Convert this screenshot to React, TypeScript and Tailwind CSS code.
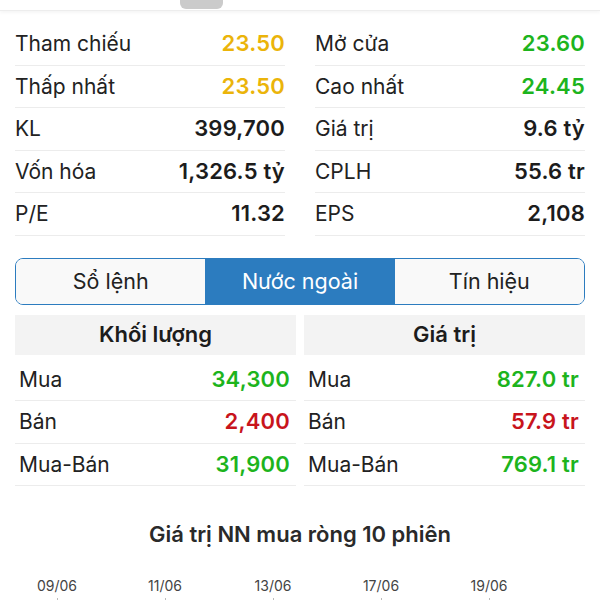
import React from 'react';

type Stat = { label: string; value: string; color: string };

const leftStats: Stat[] = [
  { label: 'Tham chiếu', value: '23.50', color: 'text-[#ebb40a]' },
  { label: 'Thấp nhất', value: '23.50', color: 'text-[#ebb40a]' },
  { label: 'KL', value: '399,700', color: 'text-[#1c1c1c]' },
  { label: 'Vốn hóa', value: '1,326.5 tỷ', color: 'text-[#1c1c1c]' },
  { label: 'P/E', value: '11.32', color: 'text-[#1c1c1c]' },
];

const rightStats: Stat[] = [
  { label: 'Mở cửa', value: '23.60', color: 'text-[#1db41d]' },
  { label: 'Cao nhất', value: '24.45', color: 'text-[#1db41d]' },
  { label: 'Giá trị', value: '9.6 tỷ', color: 'text-[#1c1c1c]' },
  { label: 'CPLH', value: '55.6 tr', color: 'text-[#1c1c1c]' },
  { label: 'EPS', value: '2,108', color: 'text-[#1c1c1c]' },
];

const volRows: Stat[] = [
  { label: 'Mua', value: '34,300', color: 'text-[#1db41d]' },
  { label: 'Bán', value: '2,400', color: 'text-[#c8141c]' },
  { label: 'Mua-Bán', value: '31,900', color: 'text-[#1db41d]' },
];

const valRows: Stat[] = [
  { label: 'Mua', value: '827.0 tr', color: 'text-[#1db41d]' },
  { label: 'Bán', value: '57.9 tr', color: 'text-[#c8141c]' },
  { label: 'Mua-Bán', value: '769.1 tr', color: 'text-[#1db41d]' },
];

const dates = ['09/06', '11/06', '13/06', '17/06', '19/06'];

const StatColumn: React.FC<{ items: Stat[] }> = ({ items }) => (
  <div className="flex flex-col">
    {items.map((s) => (
      <div key={s.label} className="flex h-[42.5px] items-center justify-between border-b border-[#ececec]">
        <span className="text-[21px] text-[#222]">{s.label}</span>
        <span className={`text-[22px] font-semibold tracking-[0.2px] ${s.color}`}>{s.value}</span>
      </div>
    ))}
  </div>
);

const ForeignPanel: React.FC<{ title: string; rows: Stat[] }> = ({ title, rows }) => (
  <div className="flex flex-col">
    <div className="flex h-[40px] items-center justify-center bg-[#f3f3f3] text-[22px] font-semibold text-[#1c1c1c]">
      {title}
    </div>
    <div className="flex flex-col pt-[4px]">
      {rows.map((r) => (
        <div key={r.label} className="flex h-[42.5px] items-center justify-between border-b border-[#ececec] pl-[4px] pr-[6px]">
          <span className="text-[21px] text-[#222]">{r.label}</span>
          <span className={`text-[22px] font-semibold tracking-[0.2px] ${r.color}`}>{r.value}</span>
        </div>
      ))}
    </div>
  </div>
);

export default function App() {
  return (
    <div className="h-[600px] w-[600px] overflow-hidden bg-white font-['Inter','Noto_Sans',sans-serif]">
      {/* top strip (cut off card) */}
      <div className="flex h-[11px] justify-center border-b border-[#ededed] shadow-[0_2px_3px_rgba(0,0,0,0.04)]">
        <div className="ml-[-197px] h-[9px] w-[43px] rounded-b-[6px] bg-[#cbcbcb]" />
      </div>

      <div className="grid grid-cols-2 gap-[30px] px-[15px] pt-[12px]">
        <StatColumn items={leftStats} />
        <StatColumn items={rightStats} />
      </div>

      <div className="mx-[15px] mt-[22px] grid h-[47px] grid-cols-3 overflow-hidden rounded-[8px] border-[1.5px] border-[#2c7cbf]">
        <div className="flex items-center justify-center bg-[#f9f9f9] text-[21.5px] text-[#222]">Sổ lệnh</div>
        <div className="flex items-center justify-center bg-[#2c7cbf] text-[21.5px] text-white">Nước ngoài</div>
        <div className="flex items-center justify-center bg-[#f9f9f9] text-[21.5px] text-[#222]">Tín hiệu</div>
      </div>

      <div className="mx-[15px] mt-[10px] grid grid-cols-2 gap-[8px]">
        <ForeignPanel title="Khối lượng" rows={volRows} />
        <ForeignPanel title="Giá trị" rows={valRows} />
      </div>

      <div className="mt-[32px] text-center text-[22px] font-semibold text-[#2a2a2a]">
        Giá trị NN mua ròng 10 phiên
      </div>

      <div className="mt-[24px] flex pl-[3px]">
        {dates.map((d) => (
          <div key={d} className="flex w-[108px] flex-col items-center">
            <span className="text-[14px] text-[#444]">{d}</span>
            <span className="mt-[2px] h-[4px] w-px bg-[#bbb]" />
          </div>
        ))}
      </div>
    </div>
  );
}
